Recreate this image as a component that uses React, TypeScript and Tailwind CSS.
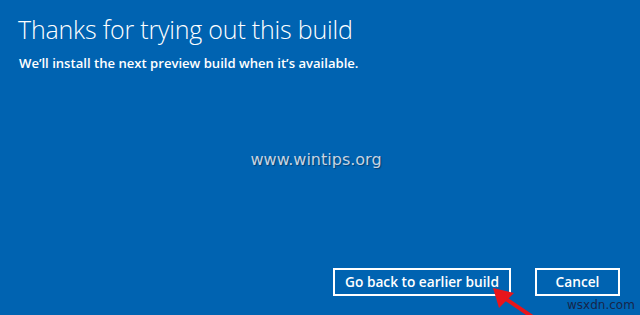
export default function App() {
  return (
    <div
      className="relative flex h-[315px] w-[640px] flex-col overflow-hidden bg-[#0063b1] text-white"
      style={{ fontFamily: '"Open Sans", "Noto Sans", sans-serif' }}
    >
      {/* Heading */}
      <div className="pl-[18px] pt-[13px]">
        <h1 className="text-[25px] font-light leading-[32px] tracking-[-0.2px]">Thanks for trying out this build</h1>
        <p className="mt-[10px] pl-[1px] text-[13.1px] font-semibold leading-[16px]">
          We’ll install the next preview build when it’s available.
        </p>
      </div>

      {/* Watermark */}
      <div className="flex flex-1 items-center justify-center pr-[8px] pb-[20px]">
        <span
          className="text-[16px] text-[#c6d3e2] [text-shadow:1px_1px_1px_rgba(0,0,0,0.35)]"
          style={{ fontFamily: '"DejaVu Sans", Verdana, sans-serif' }}
        >
          www.wintips.org
        </span>
      </div>

      {/* Buttons */}
      <div className="flex justify-end gap-[24px] pb-[19px] pr-[20px]">
        <button className="h-[28px] w-[178px] border-2 border-white text-[13.7px] font-semibold leading-none">
          Go back to earlier build
        </button>
        <button className="h-[28px] w-[85px] border-2 border-white text-[13.7px] font-semibold leading-none">
          Cancel
        </button>
      </div>

      {/* Red arrow */}
      <svg className="absolute left-0 top-0" width="640" height="315" viewBox="0 0 640 315">
        <line x1="506" y1="299" x2="540" y2="322" stroke="#e8151b" strokeWidth="4" />
        <polygon points="493,288 514,293 499,308" fill="#e8151b" />
      </svg>

      <span
        className="absolute left-[567px] top-[298px] text-[12px] leading-[14px] text-[#17264a]"
        style={{ fontFamily: '"DejaVu Sans", sans-serif' }}
      >
        wsxdn.com
      </span>
    </div>
  );
}
